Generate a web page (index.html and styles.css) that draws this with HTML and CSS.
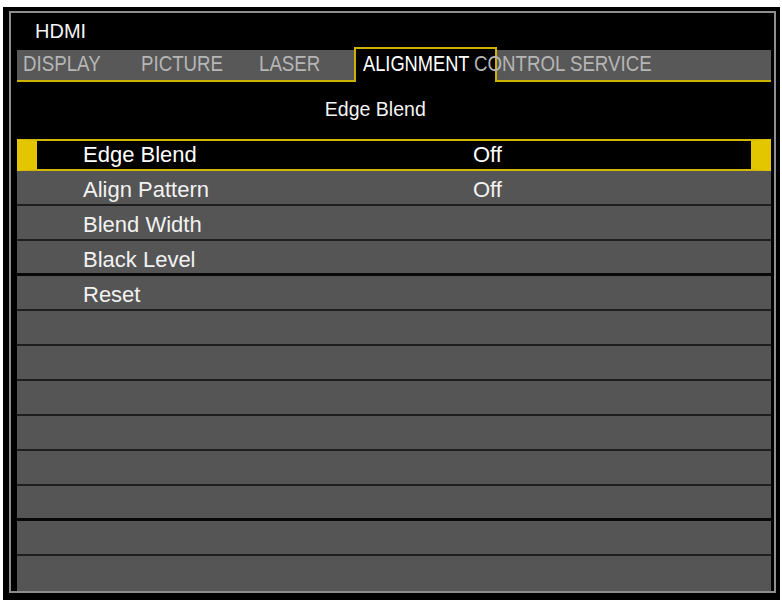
FILE: index.html
```html
<!DOCTYPE html>
<html lang="en">
<head>
<meta charset="utf-8">
<title>HDMI - Alignment - Edge Blend</title>
<link rel="stylesheet" href="styles.css">
</head>
<body>
<div class="frame">
  <div class="screen">
    <div class="source">HDMI</div>
    <div class="tabbar">
      <div class="tab tab-display"><span class="tab-label">DISPLAY</span></div>
      <div class="tab tab-picture"><span class="tab-label">PICTURE</span></div>
      <div class="tab tab-laser"><span class="tab-label">LASER</span></div>
      <div class="tab tab-active"><span class="tab-label">ALIGNMENT</span></div>
      <div class="tab tab-control"><span class="tab-label">CONTROL SERVICE</span></div>
    </div>
    <div class="title"><span class="title-text">Edge Blend</span></div>
    <div class="menu">
      <div class="row row-selected"><span class="label">Edge Blend</span><span class="value">Off</span></div>
      <div class="row"><span class="label">Align Pattern</span><span class="value">Off</span></div>
      <div class="row"><span class="label">Blend Width</span></div>
      <div class="row row-thick"><span class="label">Black Level</span></div>
      <div class="row"><span class="label">Reset</span></div>
      <div class="row"></div>
      <div class="row"></div>
      <div class="row"></div>
      <div class="row"></div>
      <div class="row"></div>
      <div class="row row-thick"></div>
      <div class="row"></div>
      <div class="row row-last"></div>
    </div>
  </div>
</div>
</body>
</html>
```

FILE: styles.css
```css
* {
  box-sizing: border-box;
}

html, body {
  margin: 0;
  padding: 0;
  background: #ffffff;
}

body {
  font-family: "Liberation Sans", Arial, sans-serif;
  color: #f2f2f2;
}

.frame {
  margin: 7px 0 0 3px;
  width: 777px;
  height: 593px;
  padding: 4px 4px 7px 6px;
  background: #000;
}

.screen {
  height: 100%;
  border: 2px solid #8e8e8e;
  padding: 0 3px 0 6px;
  background: #000;
  display: flex;
  flex-direction: column;
}

.source {
  height: 34px;
  padding: 8px 0 0 18px;
  font-size: 20px;
  line-height: 20px;
  color: #f4f4f4;
}

.tabbar {
  display: flex;
  height: 35px;
  padding-left: 6px;
  border-bottom: 2px solid #cdb300;
  background: linear-gradient(to bottom, #000 0, #000 3px, #585858 3px, #585858 100%);
}

.tab {
  padding-top: 3px;
  font-size: 22px;
  line-height: 28px;
  color: #b6b6b6;
  white-space: nowrap;
}

.tab-label {
  display: inline-block;
  transform: scaleX(0.85);
  transform-origin: left center;
}

.tab-display { width: 118px; }
.tab-picture { width: 118px; }
.tab-laser { width: 95px; }

.tab-active {
  width: 143px;
  height: 35px;
  margin-bottom: -2px;
  padding: 1px 0 0 7px;
  border: 2px solid #cdb300;
  border-bottom: none;
  background: #000;
  color: #ffffff;
}

.tab-active .tab-label {
  transform: scaleX(0.83);
}

.tab-control {
  margin-left: -23px;
}

.title {
  height: 57px;
  padding: 16px 37px 0 0;
  text-align: center;
  font-size: 21px;
  line-height: 21px;
  color: #f4f4f4;
}

.title-text {
  display: inline-block;
  transform: scaleX(0.93);
}

.menu {
  display: flex;
  flex-direction: column;
}

.row {
  display: flex;
  height: 35px;
  padding: 4px 0 0 66px;
  background: #555555;
  border-bottom: 2px solid #1f1f1f;
  font-size: 22px;
  line-height: 29px;
  color: #f2f2f2;
  white-space: nowrap;
}

.row-thick {
  border-bottom: 3px solid #080808;
}

.row-last {
  border-bottom: none;
}

.row-selected {
  height: 32px;
  padding: 0 0 0 46px;
  background: #000;
  border: 2px solid #d2b800;
  border-left-width: 20px;
  border-right-width: 20px;
  border-left-color: #e3c600;
  border-right-color: #e3c600;
  line-height: 28px;
  color: #ffffff;
}

.label {
  width: 390px;
}

.value {
  flex: 1;
}
```
